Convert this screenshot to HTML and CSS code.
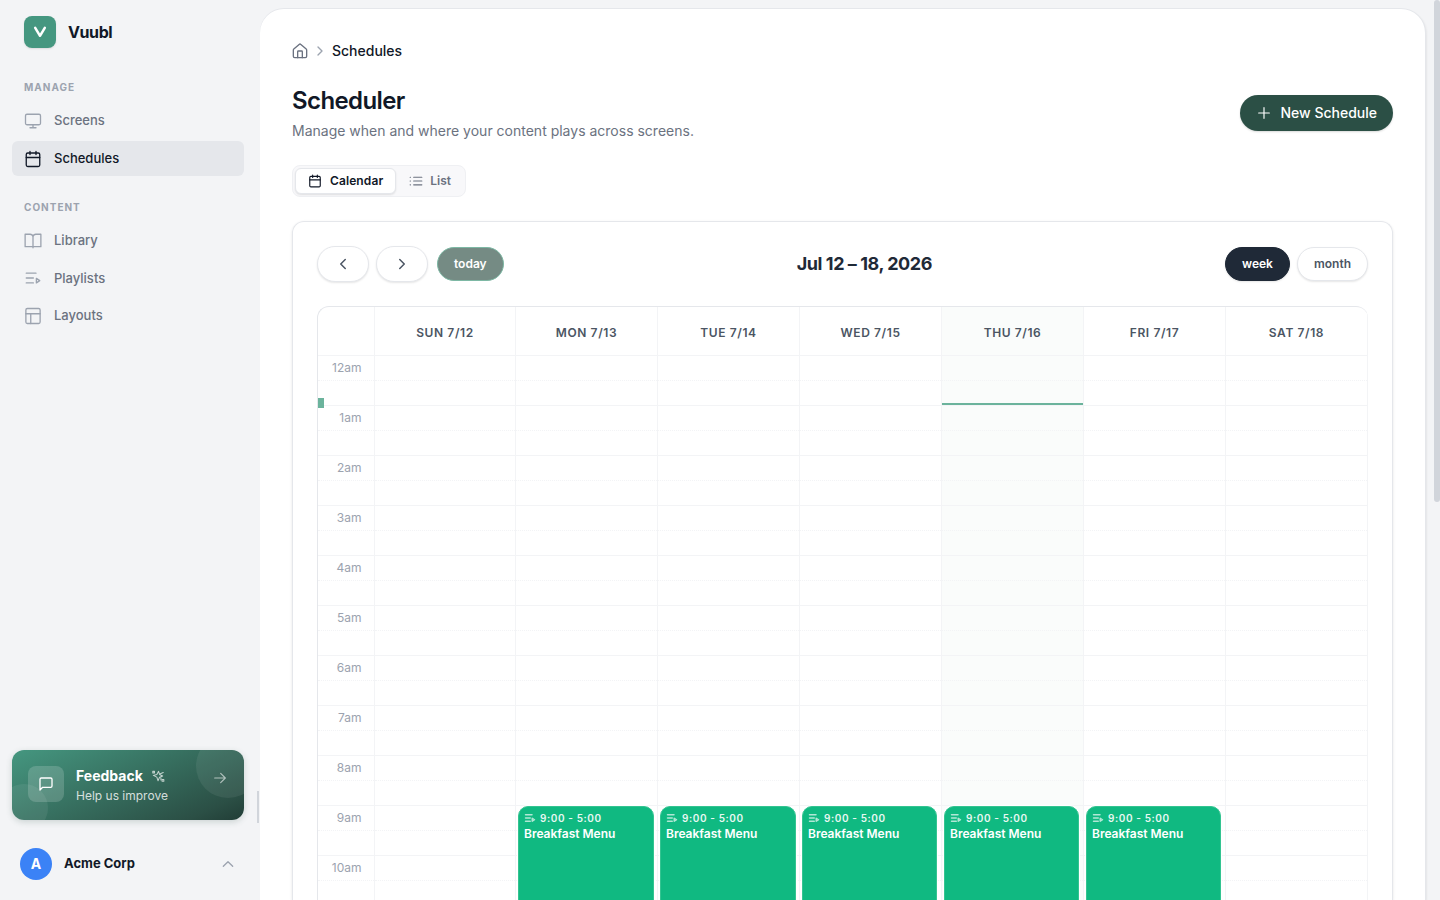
FILE: index.html
```html
<!DOCTYPE html>
<html lang="en">
<head>
  <meta charset="UTF-8">
  <meta name="viewport" content="width=device-width, initial-scale=1">
  <title>Vuubl - Schedules</title>
  <link rel="stylesheet" href="styles.css">
</head>
<body>
  <!-- Shared icons -->
  <svg class="sprite" aria-hidden="true">
    <symbol id="i-calendar" viewBox="0 0 24 24"><path d="M8 2v4M16 2v4"/><rect x="3" y="4" width="18" height="18" rx="2"/><path d="M3 10h18"/></symbol>
    <symbol id="i-playlist" viewBox="0 0 24 24"><path d="M3 5.500h13M3 12h9.500M3 18.500h9.500M16.500 12.500v6l4.500-3z"/></symbol>
    <symbol id="i-right" viewBox="0 0 24 24"><path d="m9 18 6-6-6-6"/></symbol>
  </svg>

  <aside class="sidebar">
    <div class="brand">
      <span class="brand-logo"><svg class="icon" viewBox="0 0 16 16"><path d="M3.2 3.8 8 11.8l4.8-8"/></svg></span>
      <span class="brand-name">Vuubl</span>
    </div>

    <nav class="nav">
      <div class="nav-label">Manage</div>
      <a class="nav-item" href="#">
        <svg class="icon" viewBox="0 0 24 24"><rect x="2" y="3" width="20" height="14" rx="2"/><path d="M8 21h8M12 17v4"/></svg>
        Screens
      </a>
      <a class="nav-item active" href="#">
        <svg class="icon"><use href="#i-calendar"/></svg>
        Schedules
      </a>
      <div class="nav-label">Content</div>
      <a class="nav-item" href="#">
        <svg class="icon" viewBox="0 0 24 24"><path d="M12 6v15M12 19.500H1.500V3H8a4 4 0 0 1 4 3 4 4 0 0 1 4-3h6.500v16.500H12"/></svg>
        Library
      </a>
      <a class="nav-item" href="#">
        <svg class="icon"><use href="#i-playlist"/></svg>
        Playlists
      </a>
      <a class="nav-item" href="#">
        <svg class="icon" viewBox="0 0 24 24"><rect x="2.500" y="2" width="19" height="20" rx="2"/><path d="M2.500 9h19M9 22V9"/></svg>
        Layouts
      </a>
    </nav>

    <a class="feedback" href="#">
      <span class="feedback-icon"><svg class="icon" viewBox="0 0 24 24"><path d="M21 15a2 2 0 0 1-2 2H7l-4 4V5a2 2 0 0 1 2-2h14a2 2 0 0 1 2 2z"/></svg></span>
      <span class="feedback-text">
        <span class="feedback-title">Feedback
          <svg class="icon" viewBox="0 0 24 24"><path d="m13 4 1.700 5.300L20 12l-5.300 2L12 20l-2-6-6-3 6-1.500zM16 8l5-2M5 5l1 1M3 4h3v3H3zM19 18h3v3h-3zM17 15v4"/></svg>
        </span>
        <span class="feedback-sub">Help us improve</span>
      </span>
      <svg class="icon feedback-arrow" viewBox="0 0 24 24"><path d="M4 12h16M13 5l7 7-7 7"/></svg>
    </a>

    <div class="account">
      <span class="avatar">A</span>
      <span class="account-name">Acme Corp</span>
      <svg class="icon" viewBox="0 0 24 24"><path d="m5 15.500 7-7 7 7"/></svg>
    </div>
    <span class="sidebar-thumb"></span>
  </aside>

  <main class="panel">
    <div class="breadcrumb">
      <svg class="icon" viewBox="0 0 24 24"><path d="M8.500 22v-9a1 1 0 0 1 1-1h5a1 1 0 0 1 1 1v9"/><path d="M2 10.500a2 2 0 0 1 .7-1.500l8-6.900a2 2 0 0 1 2.600 0l8 6.900a2 2 0 0 1 .7 1.500V20a2 2 0 0 1-2 2H4a2 2 0 0 1-2-2z"/></svg>
      <svg class="icon sep"><use href="#i-right"/></svg>
      <span>Schedules</span>
    </div>

    <header class="page-header">
      <div>
        <h1>Scheduler</h1>
        <p>Manage when and where your content plays across screens.</p>
      </div>
      <button class="btn-new">
        <svg class="icon" viewBox="0 0 24 24"><path d="M4 12h16M12 4v16"/></svg>
        New Schedule
      </button>
    </header>

    <div class="tabs">
      <button class="tab active"><svg class="icon"><use href="#i-calendar"/></svg>Calendar</button>
      <button class="tab"><svg class="icon" viewBox="0 0 24 24"><path d="M8 5.500h14M8 12h14M8 18.500h14M2 5.500h.5M2 12h.5M2 18.500h.5"/></svg>List</button>
    </div>

    <section class="card">
      <div class="toolbar">
        <div class="toolbar-group">
          <button class="cal-btn arrow"><svg class="icon" viewBox="0 0 24 24"><path d="m15 18-6-6 6-6"/></svg></button>
          <button class="cal-btn arrow"><svg class="icon"><use href="#i-right"/></svg></button>
          <button class="cal-btn today">today</button>
        </div>
        <h2>Jul 12 – 18, 2026</h2>
        <div class="toolbar-group">
          <button class="cal-btn selected">week</button>
          <button class="cal-btn">month</button>
        </div>
      </div>

      <div class="calendar">
        <div class="cal-row cal-head" id="head"></div>
        <div id="hours"></div>
      </div>
    </section>
  </main>
  <div class="page-thumb"></div>

  <script src="script.js"></script>
</body>
</html>
```
FILE: styles.css
```css
* {
  box-sizing: border-box;
}
body {
  margin: 0;
  height: 100vh;
  display: flex;
  overflow: hidden;
  background: #f3f4f6;
  color: #111827;
  font-family: Inter, sans-serif;
  font-size: 14px;
}
button {
  font-family: inherit;
  border: 0;
  padding: 0;
}
a {
  color: inherit;
  text-decoration: none;
}
.sprite {
  position: absolute;
  width: 0;
  height: 0;
}
.icon {
  width: 16px;
  height: 16px;
  flex-shrink: 0;
  fill: none;
  stroke: currentColor;
  stroke-width: 2;
  stroke-linecap: round;
  stroke-linejoin: round;
}

/* Sidebar */
.sidebar {
  position: relative;
  z-index: 2;
  width: 260px;
  height: 100vh;
  flex-shrink: 0;
  display: flex;
  flex-direction: column;
  padding: 16px 16px 20px 12px;
}
.brand {
  display: flex;
  align-items: center;
  gap: 12px;
  padding-left: 12px;
}
.brand-logo {
  width: 32px;
  height: 32px;
  border-radius: 8px;
  background: #459780;
  color: #fff;
  display: flex;
  align-items: center;
  justify-content: center;
  box-shadow: 0 1px 2px rgba(0,0,0,0.1);
}
.brand-logo .icon {
  stroke-width: 2.5;
}
.brand-name {
  font-size: 16px;
  font-weight: 700;
  letter-spacing: -0.4px;
}
.nav {
  display: flex;
  flex-direction: column;
  gap: 2.5px;
  padding-top: 30.5px;
}
.nav-label {
  height: 22px;
  padding-left: 12px;
  font-size: 10px;
  line-height: 17px;
  font-weight: 700;
  letter-spacing: 1px;
  text-transform: uppercase;
  color: #9ca3af;
}
.nav-item + .nav-label {
  margin-top: 20px;
}
.nav-item {
  height: 35px;
  display: flex;
  align-items: center;
  gap: 12px;
  padding: 0 12px 1px;
  border-radius: 6px;
  font-size: 13px;
  font-weight: 500;
  color: #6b7280;
}
.nav-item .icon {
  width: 18px;
  height: 18px;
  margin-top: 1px;
  color: #9ca3af;
  stroke-width: 1.75;
}
.nav-item.active {
  margin-top: 0.5px;
  background: #e5e7eb;
  color: #111827;
}
.nav-item.active .icon {
  color: #111827;
}
.feedback {
  position: relative;
  overflow: hidden;
  display: flex;
  align-items: center;
  gap: 12px;
  height: 70px;
  margin-top: auto;
  padding: 0 16px;
  border-radius: 12px;
  color: #fff;
  background: linear-gradient(155deg, #459780 0%, #2b4f45 85%, #213d36 100%);
  box-shadow: 0 2px 6px rgba(43,79,69,0.2);
}
.feedback::before,
.feedback::after {
  content: "";
  position: absolute;
  border-radius: 50%;
}
.feedback::before {
  width: 64px;
  height: 64px;
  right: -16px;
  top: -16px;
  background: rgba(255,255,255,0.07);
}
.feedback::after {
  width: 48px;
  height: 48px;
  left: -12px;
  bottom: -12px;
  background: rgba(255,255,255,0.07);
}
.feedback-icon {
  width: 36px;
  height: 36px;
  margin-bottom: 2px;
  border-radius: 8px;
  background: rgba(255,255,255,0.17);
  display: flex;
  align-items: center;
  justify-content: center;
}
.feedback-text {
  flex: 1;
  display: flex;
  flex-direction: column;
  gap: 2px;
}
.feedback-title {
  display: flex;
  align-items: center;
  gap: 8px;
  font-weight: 700;
  line-height: 20px;
}
.feedback-title .icon {
  width: 14px;
  height: 14px;
  color: rgba(255,255,255,0.7);
  stroke-width: 1.75;
}
.feedback-sub {
  font-size: 12px;
  line-height: 16px;
  color: rgba(255,255,255,0.8);
}
.feedback-arrow {
  align-self: flex-start;
  margin-top: 20px;
  color: rgba(255,255,255,0.6);
  stroke-width: 1.75;
}
.account {
  display: flex;
  align-items: center;
  gap: 12px;
  margin-top: 28px;
  padding: 0 8px;
}
.account .icon {
  color: #9ca3af;
}
.account-name {
  flex: 1;
  padding-bottom: 2px;
  font-size: 13px;
  font-weight: 700;
}
.avatar {
  width: 32px;
  height: 32px;
  border-radius: 50%;
  background: #3b82f6;
  color: #fff;
  font-weight: 700;
  line-height: 32px;
  text-align: center;
}
.sidebar-thumb {
  position: absolute;
  right: 1px;
  top: 791px;
  width: 2px;
  height: 32px;
  background: #d1d5db;
}
.page-thumb {
  position: absolute;
  right: 0;
  top: 0;
  width: 6px;
  height: 502px;
  border-radius: 3px;
  background: #d1d5db;
}

/* Page */
.panel {
  display: flex;
  flex-direction: column;
  width: 1165px;
  height: calc(100vh - 9px);
  margin-top: 9px;
  padding: 32px 32px 0;
  overflow: hidden;
  border-radius: 24px 24px 0 0;
  background: #fff;
  box-shadow: 1px 0 0 #e5e7eb, 0 -1px 0 #e5e7eb, 2px 1px 2px rgba(0,0,0,0.06);
}
.breadcrumb {
  display: flex;
  align-items: center;
  height: 20px;
  font-weight: 500;
}
.breadcrumb span {
  padding-bottom: 1px;
}
.breadcrumb .icon {
  color: #6b7280;
}
.breadcrumb .sep {
  margin: 0 4px;
  color: #9ca3af;
}
.page-header {
  display: flex;
  align-items: center;
  justify-content: space-between;
  margin-top: 24px;
}
.page-header h1 {
  margin: 0;
  font-size: 24px;
  line-height: 32px;
  font-weight: 600;
  letter-spacing: -0.6px;
}
.page-header p {
  margin: 4px 0 0;
  line-height: 20px;
  color: #6b7280;
}
.btn-new {
  display: flex;
  align-items: center;
  gap: 8px;
  height: 36px;
  padding: 0 16px 1px;
  border-radius: 18px;
  background: #2b4f45;
  color: #fff;
  font-size: 14px;
  font-weight: 500;
  box-shadow: 0 1px 2px rgba(0,0,0,0.15);
}
.btn-new .icon {
  stroke-width: 1.75;
}
.tabs {
  display: flex;
  width: 174px;
  height: 32px;
  flex-shrink: 0;
  margin-top: 24px;
  padding: 2px;
  border: 1px solid #eff0f3;
  border-radius: 8px;
  background: #f8f8fa;
}
.tab {
  display: flex;
  align-items: center;
  gap: 8px;
  padding: 0 12px 1px;
  border: 1px solid transparent;
  border-radius: 6px;
  background: none;
  color: #6b7280;
  font-size: 12px;
  font-weight: 600;
}
.tab .icon {
  width: 14px;
  height: 14px;
}
.tab + .tab {
  gap: 7px;
}
.tab.active {
  background: #fff;
  border-color: #e5e7eb;
  color: #111827;
  letter-spacing: 0.1px;
  box-shadow: 0 1px 2px rgba(0,0,0,0.1);
}
.card {
  flex: 1;
  min-height: 0;
  margin-top: 24px;
  padding: 24px 24px 0;
  overflow: hidden;
  border: 1px solid #e5e7eb;
  border-bottom: 0;
  border-radius: 12px 12px 0 0;
  box-shadow: 0 1px 3px rgba(0,0,0,0.1);
}

/* Calendar toolbar */
.toolbar {
  display: flex;
  justify-content: space-between;
  align-items: center;
  height: 36px;
}
.toolbar h2 {
  margin: 0;
  padding-bottom: 1px;
  font-size: 18px;
  font-weight: 700;
  letter-spacing: -0.45px;
  color: #1f2937;
}
.toolbar-group {
  display: flex;
  align-items: center;
  gap: 7px;
}
.cal-btn {
  display: flex;
  align-items: center;
  justify-content: center;
  height: 34px;
  padding: 0 16px 1px;
  border: 1px solid #e5e7eb;
  border-radius: 18px;
  background: #fff;
  color: #4b5563;
  font-size: 12px;
  font-weight: 600;
  box-shadow: 0 1px 2px rgba(0,0,0,0.1);
}
.cal-btn.arrow {
  width: 52px;
  height: 36px;
  padding-bottom: 0;
}
.cal-btn.arrow .icon {
  width: 18px;
  height: 18px;
}
.cal-btn.today {
  margin-left: 2px;
  background: #758b84;
  border-color: #7db8a4;
  color: #fff;
  box-shadow: none;
}
.cal-btn.selected {
  background: #1f2937;
  border-color: #1f2937;
  color: #fff;
}

/* Week grid */
.calendar {
  margin-top: 24px;
  border: 1px solid #e5e7eb;
  border-width: 1px 0 0 1px;
  border-radius: 12px 12px 0 0;
  overflow: hidden;
}
.cal-row {
  display: grid;
  grid-template-columns: 57px 141px repeat(6, 142px);
  height: 50px;
}
.cal-row > div {
  position: relative;
  border-right: 1px solid #f3f4f6;
  border-bottom: 1px solid #f3f4f6;
}
.cal-head {
  height: 49px;
  line-height: 48px;
  text-align: center;
  font-size: 12px;
  font-weight: 600;
  letter-spacing: 0.6px;
  color: #4b5563;
}
.cal-head > div {
  height: 49px;
  padding-top: 2px;
}
.cal-row > .is-today {
  background: #fafcfb;
}
.half {
  height: 25px;
  border-bottom: 1px dotted #f3f4f6;
}
.axis .half {
  padding-right: 12.5px;
  line-height: 24px;
  text-align: right;
  font-size: 12px;
  color: #9ca3af;
}
.now-line {
  position: absolute;
  left: 0;
  right: 0;
  top: 47px;
  z-index: 1;
  height: 2px;
  background: #6bb39c;
}
.now-mark {
  position: absolute;
  left: 0;
  top: 42px;
  z-index: 1;
  width: 6px;
  height: 10px;
  background: #6bb39c;
}
.event {
  position: absolute;
  left: 2px;
  width: 136px;
  top: 0;
  z-index: 1;
  height: 399px;
  padding: 4px 5px;
  border: 1px solid #34c491;
  border-radius: 10px;
  background: #10b981;
  color: #fff;
  box-shadow: 0 0 0 1px #fff;
}
.cal-row > div:nth-child(n+5) .event {
  width: 135px;
}
.event-time {
  display: flex;
  align-items: center;
  gap: 4px;
  height: 14px;
  font-size: 10px;
  font-weight: 600;
  letter-spacing: 0.6px;
  opacity: 0.9;
}
.event-time .icon {
  width: 12px;
  height: 12px;
  opacity: 0.75;
  stroke-width: 3;
}
.event-name {
  margin-top: 1px;
  font-size: 12px;
  line-height: 16px;
  font-weight: 600;
}
```
FILE: script.js
```js
const days = ["Sun 7/12", "Mon 7/13", "Tue 7/14", "Wed 7/15", "Thu 7/16", "Fri 7/17", "Sat 7/18"];
const today = 4;
const event = { title: "Breakfast Menu", time: "9:00 - 5:00", start: 9, days: [1, 2, 3, 4, 5] };

// Header row
const head = document.getElementById("head");
head.appendChild(document.createElement("div"));
days.forEach((day, i) => {
  const cell = document.createElement("div");
  cell.textContent = day.toUpperCase();
  if (i === today) cell.className = "is-today";
  head.appendChild(cell);
});

// One row per hour, with a dotted line at the half hour
const hours = document.getElementById("hours");
for (let h = 0; h < 11; h++) {
  const row = document.createElement("div");
  row.className = "cal-row";
  const label = (h % 12 || 12) + (h < 12 ? "am" : "pm");
  let html = `<div class="axis"><div class="half">${label}</div>${h === 0 ? '<span class="now-mark"></span>' : ""}</div>`;
  days.forEach((day, i) => {
    html += `<div class="${i === today ? "is-today" : ""}"><div class="half"></div>`;
    if (h === 0 && i === today) html += '<span class="now-line"></span>';
    if (h === event.start && event.days.includes(i)) {
      html += `<div class="event">
        <div class="event-time"><svg class="icon"><use href="#i-playlist"/></svg>${event.time}</div>
        <div class="event-name">${event.title}</div>
      </div>`;
    }
    html += "</div>";
  });
  row.innerHTML = html;
  hours.appendChild(row);
}
```
